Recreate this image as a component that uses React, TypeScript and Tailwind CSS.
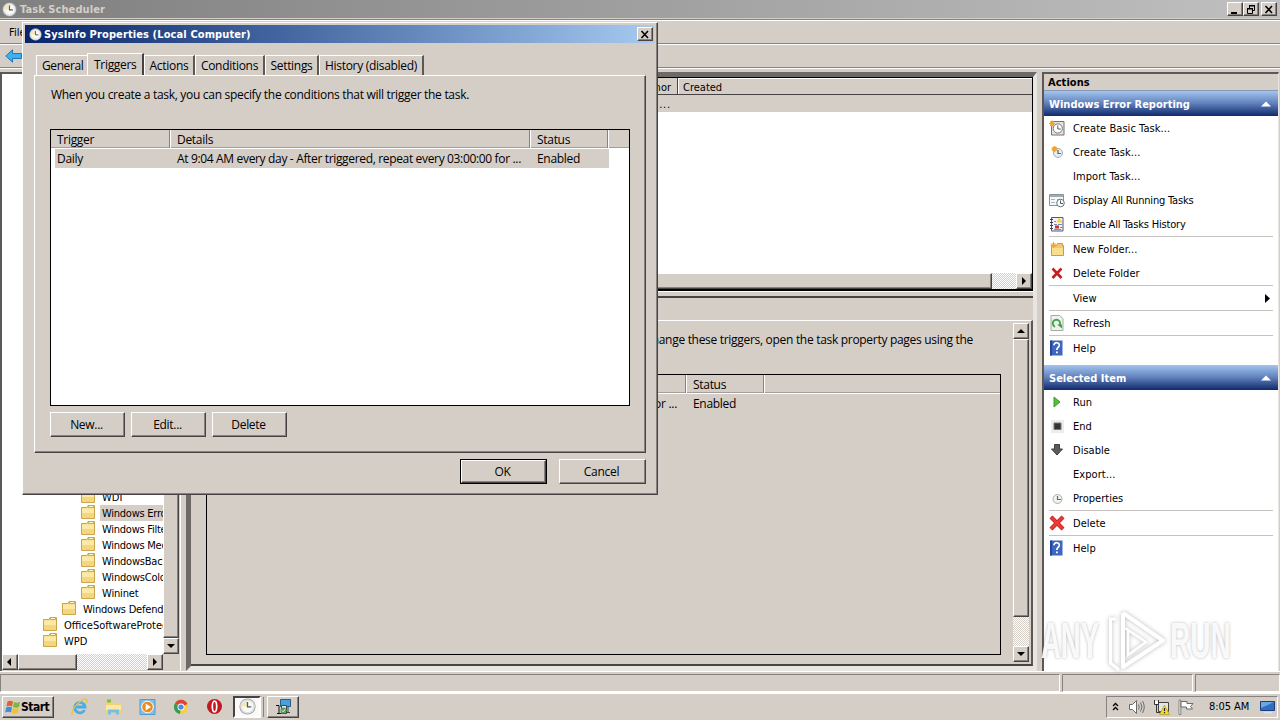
import React from "react";
import clsx from "clsx";

const raised =
  "border border-t-white border-l-white border-b-[#474243] border-r-[#474243] bg-[#d5cec7] shadow-[inset_-1px_-1px_0_#868280]";
const dither =
  "bg-[repeating-conic-gradient(#ffffff_0_25%,#d5cec7_0_50%)] [background-size:2px_2px]";
const segoe = "font-['Open_Sans','Noto_Sans',sans-serif] text-[12px] tracking-[-0.3px]";

type Dir = "up" | "down" | "left" | "right";

function Arrow({ dir }: { dir: Dir }) {
  const d = {
    up: "M0 6h8L4 2z",
    down: "M0 2h8L4 6z",
    left: "M5 0v8L1 4z",
    right: "M2 0v8l4-4z",
  }[dir];
  return (
    <svg width="8" height="8" viewBox="0 0 8 8">
      <path d={d} fill="#000" />
    </svg>
  );
}

function ScrollButton({ dir, className }: { dir: Dir; className?: string }) {
  return (
    <div className={clsx("flex h-4 w-4 shrink-0 items-center justify-center", raised, className)}>
      <Arrow dir={dir} />
    </div>
  );
}

function Clock({ size = 16 }: { size?: number }) {
  return (
    <svg width={size} height={size} viewBox="0 0 16 16">
      <circle cx="8" cy="8" r="7.6" fill="#9a9fa6" />
      <circle cx="8" cy="8" r="6.9" fill="#dfe2e4" />
      <circle cx="8" cy="8" r="5.2" fill="#fbfaf0" />
      <path d="M8 8V2.800A5.200 5.200 0 0 0 2.800 8z" fill="#f7e6ae" />
      <path d="M8 3.800V8.400h3.600" fill="none" stroke="#4b5b74" strokeWidth="1.200" />
    </svg>
  );
}

function Folder() {
  return (
    <svg width="16" height="16" viewBox="0 0 16 16" className="mb-[2px] shrink-0">
      <path d="M1.500 3.500h5.500l1-2h6.500v13h-13z" fill="#f5d983" stroke="#c9a54b" />
      <path d="M2 4.500h12v5H2z" fill="#fce9a6" />
      <path d="M2 9h12v5H2z" fill="#f5d67e" />
      <path d="M8.500 1.500h5v2h-5z" fill="#fff6d2" stroke="#b99a4e" strokeWidth=".8" />
    </svg>
  );
}

function ActionIcon({ name }: { name: string }) {
  switch (name) {
    case "basic":
      return (
        <svg width="16" height="16" viewBox="0 0 16 16">
          <path d="M2.500 1.500h12.500v13.500h-12.500z" fill="#e9e2dc" stroke="#7d6f6a" />
          <circle cx="8.800" cy="8.500" r="4.600" fill="#fff" stroke="#6c7c7c" />
          <path d="M8.800 5.500v3.500h3" fill="none" stroke="#50606a" />
          <path d="M3 .5v6M0 3.500h6M1 1.500l4 4M5 1.500l-4 4" stroke="#f0a431" strokeWidth="1.200" />
        </svg>
      );
    case "create":
      return (
        <svg width="16" height="16" viewBox="0 0 16 16">
          <circle cx="9" cy="9" r="4.500" fill="#e6ecf0" stroke="#9dadb6" />
          <path d="M9 6v3.500h2.800" fill="none" stroke="#54677a" strokeWidth="1.200" />
          <path d="M5.500 2v6M2.500 5h6M3.500 3l4 4M7.500 3l-4 4" stroke="#f0a431" strokeWidth="1.500" />
        </svg>
      );
    case "running":
      return (
        <svg width="16" height="16" viewBox="0 0 16 16">
          <path d="M.5 2.500h14v11H.5z" fill="#f7f8f8" stroke="#8a949b" />
          <path d="M1 3h13v2H1z" fill="#9fa9b1" />
          <path d="M2 7.500h4M2 10.500h4M8 7.500h5" stroke="#a9b3b8" />
          <circle cx="11.500" cy="11" r="3.800" fill="#fff" stroke="#65767a" />
          <path d="M11.500 8.500V11.500h2.500" fill="none" stroke="#3d6a50" />
        </svg>
      );
    case "history":
      return (
        <svg width="16" height="16" viewBox="0 0 16 16">
          <path d="M2.500 1.500h11.500v13.500h-11.500z" fill="#f1f1fa" stroke="#54567c" />
          <path d="M1 3.500h3M1 6.500h3M1 9.500h3M1 12.500h3" stroke="#3d3d50" />
          <path d="M10 1.500l3.500 5h-6z" fill="#f5d72f" />
          <path d="M5 5.500h2M5 8.500h3M9 8.500h4M11 11.500h2.500M5 13.500h7" stroke="#7c88b8" />
          <path d="M6 9.500h4v3H6z" fill="#c8372d" />
        </svg>
      );
    case "newfolder":
      return (
        <svg width="16" height="16" viewBox="0 0 16 16">
          <path d="M2.500 4.500h5l1-2h5v2h1v10h-12z" fill="#f2c96a" stroke="#cd9c3a" />
          <path d="M3 7h11v7H3z" fill="#fadd8d" />
          <path d="M4.500 1v6M1.500 4h6M2.500 2l4 4M6.500 2l-4 4" stroke="#f0a431" />
        </svg>
      );
    case "redx":
      return (
        <svg width="16" height="16" viewBox="0 0 16 16">
          <path d="M3.500 3.500l9 9.500M12.500 3.500l-9 9.500" stroke="#c81e1e" strokeWidth="2.600" />
        </svg>
      );
    case "refresh":
      return (
        <svg width="16" height="16" viewBox="0 0 16 16">
          <path d="M2 .5h8.500l3.500 3v12H2z" fill="#eef4ec" stroke="#a3aaa3" />
          <path d="M6 11.800A3.700 3.700 0 1 1 10.500 10.500" fill="none" stroke="#3fa648" strokeWidth="1.900" />
          <path d="M8 9.500h5v4z" fill="#3fa648" />
        </svg>
      );
    case "help":
      return (
        <svg width="16" height="16" viewBox="0 0 16 16">
          <path d="M1 .5h12.500v15H1z" fill="#3f66bf" />
          <path d="M1 .5h2v15H1z" fill="#25459a" />
          <path d="M5 5.200C5 1.800 10.500 2 10.300 5.200 10.200 7.500 7.800 7.200 7.800 10" fill="none" stroke="#fff" strokeWidth="1.700" />
          <path d="M7 11.500h1.800v1.700H7z" fill="#fff" />
        </svg>
      );
    case "run":
      return (
        <svg width="16" height="16" viewBox="0 0 16 16">
          <path d="M5 3l6 5-6 5z" fill="#4fc23a" stroke="#3b9d2c" />
        </svg>
      );
    case "end":
      return (
        <svg width="16" height="16" viewBox="0 0 16 16">
          <path d="M2 2h13v13H2z" fill="#ececec" />
          <path d="M5 5h7v6.500H5z" fill="#333" stroke="#777" />
        </svg>
      );
    case "disable":
      return (
        <svg width="16" height="16" viewBox="0 0 16 16">
          <path d="M5.500 2.500h5v4.500h3L8 13 2.500 7h3z" fill="#5c5c5c" stroke="#3e3e3e" />
        </svg>
      );
    case "props":
      return (
        <svg width="16" height="16" viewBox="0 0 16 16">
          <circle cx="8.500" cy="9" r="4.500" fill="#f0f3ee" stroke="#a7b0ab" />
          <path d="M8.500 6v3.500H12" fill="none" stroke="#587060" strokeWidth="1.200" />
        </svg>
      );
    case "bigx":
      return (
        <svg width="16" height="16" viewBox="0 0 16 16">
          <path d="M2 2l12 12M14 2l-12 12" stroke="#b71f1f" strokeWidth="4.200" />
          <path d="M2 2l12 12M14 2l-12 12" stroke="#ea3b36" strokeWidth="2.800" />
        </svg>
      );
    default:
      return null;
  }
}

function WinButton({ kind }: { kind: "min" | "restore" | "close" }) {
  return (
    <div className={clsx("flex h-[14px] w-4 items-center justify-center", raised)}>
      <svg width="10" height="9" viewBox="0 0 10 9" fill="none" stroke="#000">
        {kind === "min" && <path d="M1 8h6" strokeWidth="2" />}
        {kind === "restore" && (
          <>
            <path d="M3 1h6M3.500 1v2M8.500 1v4.500H7" />
            <path d="M1 4h6M1.500 4v4.500h5V4" />
            <path d="M3 .5h6M1 3.500h6" />
          </>
        )}
        {kind === "close" && <path d="M1.500 1l6.500 7M8 1l-6.500 7" strokeWidth="1.600" />}
      </svg>
    </div>
  );
}

function TitleBar() {
  return (
    <div className="flex h-[18px] shrink-0 items-center bg-gradient-to-r from-[#808080] to-[#c0c0c0] pr-[3px] pl-[2px]">
      <Clock size={15} />
      <span className="ml-[3px] flex-1 pt-px text-[11px] leading-[18px] font-bold tracking-[0.08px] text-[#d5cec7]">
        Task Scheduler
      </span>
      <div className="flex">
        <WinButton kind="min" />
        <WinButton kind="restore" />
        <div className="w-[2px]" />
        <WinButton kind="close" />
      </div>
    </div>
  );
}

const tree = [
  { name: "WDI", pad: "pl-[78px]" },
  { name: "Windows Error Reporting", pad: "pl-[78px] tracking-[-0.25px]", selected: true },
  { name: "Windows Filtering Platform", pad: "pl-[78px] tracking-[-0.25px]" },
  { name: "Windows Media Sharing", pad: "pl-[78px] tracking-[-0.25px]" },
  { name: "WindowsBackup", pad: "pl-[78px] tracking-[-0.2px]" },
  { name: "WindowsColorSystem", pad: "pl-[78px] tracking-[-0.2px]" },
  { name: "Wininet", pad: "pl-[78px] tracking-[-0.15px]" },
  { name: "Windows Defender", pad: "pl-[59px] tracking-[-0.2px]" },
  { name: "OfficeSoftwareProtectionPlatform", pad: "pl-[40px]" },
  { name: "WPD", pad: "pl-[40px]" },
];

function TreePane() {
  return (
    <div className="flex w-[181px] shrink-0 flex-col border-t-2 border-r border-l-2 border-t-[#5c5855] border-r-white border-l-[#5c5855] pb-px">
      <div className="flex min-h-0 flex-1">
        <div className="flex w-[161px] shrink-0 flex-col justify-end overflow-hidden bg-white pb-[5px]">
          {tree.map((t) => (
            <div key={t.name} className={clsx("flex h-4 items-center whitespace-nowrap", t.pad)}>
              <Folder />
              <span className={clsx("ml-[4px] h-4 pl-[2px] leading-[18px]", t.selected && "bg-[#d5cec7]")}>{t.name}</span>
            </div>
          ))}
        </div>
        <div className="flex w-4 flex-col">
          <ScrollButton dir="up" />
          <div className={clsx("w-4 flex-1", raised)} />
          <ScrollButton dir="down" />
        </div>
      </div>
      <div className="flex h-4">
        <ScrollButton dir="left" />
        <div className={clsx("w-[59px]", raised)} />
        <div className={clsx("w-[70px]", dither)} />
        <ScrollButton dir="right" />
      </div>
    </div>
  );
}

function CenterPane() {
  return (
    <div className="flex w-[851px] shrink-0 flex-col border-t-[5px] border-r-4 border-b-[5px] border-l-[5px] border-t-[#6d6967] border-r-[#e9e6e2] border-b-[#e9e6e2] border-l-[#6d6967]">
      {/* Task list */}
      <div className="flex h-[214px] flex-col border border-b-2 border-black bg-white">
        <div className="flex h-[17px] border-b border-[#474243] bg-[#d5cec7] leading-[19px]">
          <div className="w-[486px] border-r border-[#474243] pr-[6px] text-right">Author</div>
          <div className="flex-1 border-t border-l border-white pl-[4px] leading-[17px]">Created</div>
        </div>
        <div className="flex h-[17px] bg-[#d5cec7]">
          <div className="w-[479px] text-right leading-[19px] tracking-[0.8px]">...</div>
        </div>
        <div className="flex-1" />
        <div className="flex h-4">
          <div className={clsx("flex-1", raised)} />
          <div className={clsx("w-6", dither)} />
          <ScrollButton dir="right" />
        </div>
      </div>
      <div className="h-[5px] border-t border-white" />
      {/* Details of the selected task */}
      <div className="flex min-h-0 flex-1 flex-col border-t-2 border-t-[#474243]">
        <div className="h-[22px]" />
        <div className="flex min-h-0 flex-1 border-t border-r-2 border-b-2 border-t-white border-r-[#5c5855] border-b-[#474243]">
          <div className={clsx("flex flex-1 flex-col pl-[15px]", segoe)}>
            <div className="mt-[10px] h-[18px] w-[767px] text-right leading-[18px] whitespace-nowrap">
              To change these triggers, open the task property pages using the
            </div>
            <div className="mt-[25px] mr-[12px] h-[281px] border border-black">
              <div className="flex h-[19px] border-b border-white leading-[20px] shadow-[inset_0_-1px_0_#a39e99]">
                <div className="w-[479px] border-r border-[#868280]" />
                <div className="w-[78px] border-r border-l border-r-[#868280] border-l-white pl-[6px]">Status</div>
                <div className="border-l border-white" />
              </div>
              <div className="flex h-[20px] leading-[20px]">
                <div className="w-[470px] text-right">for ...</div>
                <div className="pl-[16px]">Enabled</div>
              </div>
            </div>
          </div>
          <div className="mr-[2px] flex w-4 flex-col py-[2px]">
            <ScrollButton dir="up" />
            <div className={clsx("flex-1", raised)} />
            <div className={clsx("h-[29px]", dither)} />
            <ScrollButton dir="down" />
          </div>
        </div>
      </div>
    </div>
  );
}

type Action = { label: string; icon: string; sep?: boolean; more?: boolean };

const taskActions: Action[] = [
  { label: "Create Basic Task...", icon: "basic" },
  { label: "Create Task...", icon: "create" },
  { label: "Import Task...", icon: "" },
  { label: "Display All Running Tasks", icon: "running" },
  { label: "Enable All Tasks History", icon: "history" },
  { label: "New Folder...", icon: "newfolder", sep: true },
  { label: "Delete Folder", icon: "redx" },
  { label: "View", icon: "", sep: true, more: true },
  { label: "Refresh", icon: "refresh", sep: true },
  { label: "Help", icon: "help", sep: true },
];

const itemActions: Action[] = [
  { label: "Run", icon: "run" },
  { label: "End", icon: "end" },
  { label: "Disable", icon: "disable" },
  { label: "Export...", icon: "" },
  { label: "Properties", icon: "props" },
  { label: "Delete", icon: "bigx", sep: true },
  { label: "Help", icon: "help", sep: true },
];

function ActionGroup({ title, actions }: { title: string; actions: Action[] }) {
  return (
    <div>
      <div className="flex h-[25px] items-center justify-between bg-gradient-to-b from-[#a3c5ee] via-[#5f80bb] to-[#12296b] pt-[3px] pr-[7px] pl-[5px] font-bold tracking-[0.01px] text-white">
        <span>{title}</span>
        <svg width="10" height="6" viewBox="0 0 10 6" className="mb-[3px]">
          <path d="M0 5.500h10L5 .5z" fill="#fff" />
        </svg>
      </div>
      {actions.map((a) => (
        <div key={a.label}>
          {a.sep && <div className="mr-[5px] ml-[5px] h-px bg-[#c6c2c0]" />}
          <div className="flex h-6 items-center pr-[7px] pl-[5px]">
            <div className="w-6">
              <ActionIcon name={a.icon} />
            </div>
            <span
              className={clsx(
                "flex-1 pt-[2px]",
                a.label.endsWith("...") ? "tracking-[0.06px]" : a.label.length < 14 ? "tracking-[0.03px]" : "tracking-[-0.18px]"
              )}
            >
              {a.label}
            </span>
            {a.more && (
              <svg width="7" height="9" viewBox="0 0 7 9">
                <path d="M1 0v9l5-4.500z" fill="#000" />
              </svg>
            )}
          </div>
        </div>
      ))}
    </div>
  );
}

function ActionsPane() {
  return (
    <div className="w-[237px] shrink-0 border-t-2 border-r border-l-2 border-t-[#5c5855] border-r-[#e9e5e1] border-l-[#5c5855] bg-white">
      <div className="h-[17px] border-b border-[#8899b5] bg-[#d5cec7] pl-1 leading-[17px] font-bold tracking-[0.05px]">Actions</div>
      <ActionGroup title="Windows Error Reporting" actions={taskActions} />
      <div className="h-[5px]" />
      <ActionGroup title="Selected Item" actions={itemActions} />
    </div>
  );
}

function DialogButton({ children, className }: { children: React.ReactNode; className: string }) {
  return <div className={clsx("flex items-center justify-center pt-px pr-[2px]", raised, className)}>{children}</div>;
}

const tabs = [
  { label: "Actions", w: "w-[51px]" },
  { label: "Conditions", w: "w-[70px]" },
  { label: "Settings", w: "w-[54px]" },
  { label: "History (disabled)", w: "w-[105px]" },
];

function Dialog() {
  return (
    <div
      className={clsx(
        "absolute top-[22px] left-[22px] flex h-[473px] w-[636px] flex-col p-[2px] pr-[3px]",
        raised,
        segoe
      )}
    >
      <div className="flex h-[18px] shrink-0 items-center bg-gradient-to-r from-[#0a246a] to-[#a6caf0] pr-[1px] pl-[4px]">
        <Clock size={13} />
        <span className="ml-[2px] flex-1 pt-[2px] font-['DejaVu_Sans_Condensed','DejaVu_Sans',sans-serif] text-[11px] font-bold tracking-[0.11px] text-white">
          SysInfo Properties (Local Computer)
        </span>
        <WinButton kind="close" />
      </div>
      <div className="mt-[10px] flex h-[22px] items-end pl-[11px] leading-[20px]">
        <div className="h-[20px] w-[51px] border-t border-l border-white pl-[5px] tracking-[-0.4px]">General</div>
        <div className="-mb-px h-[23px] w-[57px] border-t border-r-2 border-l border-t-white border-r-[#474243] border-l-white bg-[#d5cec7] pl-[6px] leading-[21px]">
          Triggers
        </div>
        {tabs.map((t) => (
          <div
            key={t.label}
            className={clsx(
              "h-[20px] border-t border-r-2 border-l border-t-white border-r-[#5c5855] border-l-white text-center whitespace-nowrap",
              t.w
            )}
          >
            {t.label}
          </div>
        ))}
      </div>
      <div className={clsx("ml-[9px] h-[378px] w-[612px] px-[15px]", raised)}>
        <div className="mt-[8px] h-[20px] pl-px leading-[21px]">
          When you create a task, you can specify the conditions that will trigger the task.
        </div>
        <div className="mt-[25px] h-[277px] border border-black bg-white">
          <div className="flex h-[19px] border-b border-white bg-[#d5cec7] leading-[20px] shadow-[inset_0_-1px_0_#a39e99]">
            <div className="w-[119px] border-r border-[#868280] pl-[6px]">Trigger</div>
            <div className="w-[360px] border-r border-l border-r-[#868280] border-l-white pl-[6px]">Details</div>
            <div className="w-[78px] border-r border-l border-r-[#868280] border-l-white pl-[6px]">Status</div>
            <div className="border-l border-white" />
          </div>
          <div className="ml-[4px] flex h-[19px] w-[554px] bg-[#d5cec7] leading-[20px] whitespace-nowrap">
            <div className="w-[122px] pl-[2px]">Daily</div>
            <div className="w-[360px] tracking-[-0.34px]">
              At 9:04 AM every day - After triggered, repeat every 03:00:00 for ...
            </div>
            <div>Enabled</div>
          </div>
        </div>
        <div className="mt-[6px] flex gap-[6px]">
          <DialogButton className="h-[25px] w-[75px]">New...</DialogButton>
          <DialogButton className="h-[25px] w-[75px]">Edit...</DialogButton>
          <DialogButton className="h-[25px] w-[75px]">Delete</DialogButton>
        </div>
      </div>
      <div className="mt-[6px] flex justify-end gap-[12px] pr-[8px]">
        <div className="border border-black">
          <DialogButton className="h-[23px] w-[85px]">OK</DialogButton>
        </div>
        <DialogButton className="h-[25px] w-[87px]">Cancel</DialogButton>
      </div>
    </div>
  );
}

function StatusBar() {
  const cell = "h-[18px] border border-t-[#868280] border-l-[#868280] border-b-white border-r-white";
  return (
    <div className="flex h-[21px] shrink-0 gap-[2px] border-b border-white pt-[2px]">
      <div className={clsx("w-[1060px]", cell)} />
      <div className={clsx("w-[131px]", cell)} />
      <div className={clsx("flex-1", cell)} />
    </div>
  );
}

function Taskbar() {
  return (
    <div className="flex h-[27px] shrink-0 items-center border-t border-white pr-[2px] pb-px pl-[2px]">
      <div className={clsx("flex h-[22px] w-[52px] items-center pl-[2px]", raised)}>
        <svg width="16" height="16" viewBox="0 0 16 16">
          <path d="M2.500 2.500Q5 .8 8 2.500L7 7.500Q4.500 6 1.500 7.500z" fill="#e2602c" />
          <path d="M9 3q3 1.500 6 0l-1 5q-3 1.500-6 0z" fill="#79b941" />
          <path d="M1.200 8.500q3-1.500 5.800 0l-1 5q-3-1.500-5.800 0z" fill="#3e8fd4" />
          <path d="M7.800 9q3 1.500 6 0l-1 5q-3 1.500-6 0z" fill="#f5bf2d" />
        </svg>
        <span className="pt-px text-[12px] font-bold tracking-[-0.5px]">Start</span>
      </div>
      <div className="ml-[17px] flex items-center gap-[17px]">
        {/* Internet Explorer */}
        <svg width="17" height="18" viewBox="0 0 17 18">
          <path d="M13.500 12A5.200 5.200 0 1 1 14 9H4.500" fill="none" stroke="#48aee8" strokeWidth="2.800" />
          <path d="M1.500 16.500C-1.500 12 12-1 15.500 1.500q1.200 1-.5 4" fill="none" stroke="#edc13a" strokeWidth="1.300" />
        </svg>
        {/* Explorer */}
        <svg width="17" height="18" viewBox="0 0 17 18">
          <path d="M1 3h6l1 2h8v10H1z" fill="#f1d274" />
          <path d="M2 1.500h4v3H2z" fill="#7dbb55" />
          <path d="M1 7h15v5H1z" fill="#f9e9a8" />
          <path d="M3 16.500v-5h11v5h-3v-2H6v2z" fill="#75bfe6" />
        </svg>
        {/* Media player */}
        <svg width="17" height="18" viewBox="0 0 17 18">
          <path d="M1 1.500h15v15H1z" fill="#7fc0ea" stroke="#579bc8" />
          <circle cx="8.500" cy="9" r="5.800" fill="#f08a1d" stroke="#fff" />
          <path d="M6.700 5.500L12 9l-5.300 3.500z" fill="#fff" />
        </svg>
        {/* Chrome */}
        <svg width="16" height="16" viewBox="0 0 16 16">
          <circle cx="8" cy="8" r="7" fill="#f9cf3a" />
          <path d="M8 8L1.900 4.500A7 7 0 0 1 14.500 5z" fill="#dc4437" />
          <path d="M8 8L1.900 4.500A7 7 0 0 0 7 15z" fill="#2d9f58" />
          <circle cx="8" cy="8" r="3.500" fill="#fff" />
          <circle cx="8" cy="8" r="2.600" fill="#4a89ee" />
        </svg>
        {/* Opera */}
        <svg width="17" height="17" viewBox="0 0 17 17">
          <circle cx="8.500" cy="8.500" r="7.500" fill="#c41722" />
          <ellipse cx="8.500" cy="8.500" rx="2.200" ry="5.300" fill="none" stroke="#fff" strokeWidth="1.700" />
        </svg>
      </div>
      <div className="ml-[10px] flex h-[22px] w-[28px] items-center justify-center border-2 border-t-[#474243] border-r-white border-b-white border-l-[#474243] bg-[#fbfaf8]">
        <Clock size={17} />
      </div>
      <div className="h-[20px] w-[3px] border-r border-[#868280]" />
      <div className={clsx("ml-[3px] flex h-[22px] w-[32px] items-center justify-center", raised)}>
        <svg width="17" height="17" viewBox="0 0 17 17">
          <path d="M5.500 1.500h10v7h-10z" fill="#4aa0dc" stroke="#2b5a82" />
          <path d="M13 9v5M10 14.500h5" stroke="#35474f" />
          <path d="M1 7.500h3v8M2 15.500h4" fill="none" stroke="#111" />
          <path d="M6.500 7.500h5v8h-5z" fill="#e7e7e0" stroke="#444" />
          <circle cx="8.500" cy="12.500" r="3" fill="#4f9f56" />
          <path d="M7 12.500l1.200 1.200 2-2.400" fill="none" stroke="#fff" />
        </svg>
      </div>
      <div className="flex-1" />
      {/* Tray */}
      <div className="flex h-[22px] w-[172px] items-center border border-t-[#868280] border-r-white border-b-white border-l-[#868280] pl-[5px]">
        <svg width="7" height="9" viewBox="0 0 7 9" fill="none" stroke="#000" strokeWidth="1.300">
          <path d="M1 4l2.500-2.500L6 4M1 8l2.500-2.500L6 8" />
        </svg>
        <svg className="ml-[9px]" width="17" height="16" viewBox="0 0 17 16" fill="none" stroke="#6b6b6b">
          <path d="M1.500 5.500h3l4-4v13l-4-4h-3z" fill="#fff" />
          <path d="M10.500 5.500q1.500 2.500 0 5M12.500 3.500q3 4.500 0 9M14.500 2q3.500 6 0 12" />
        </svg>
        <svg className="ml-[8px]" width="17" height="16" viewBox="0 0 17 16">
          <path d="M5.500 3.500h10v9h-10z" fill="#e3e5e6" stroke="#444" />
          <path d="M1.500 1v4.500h4V1M3.500 5.500v8h5" fill="none" stroke="#333" />
          <path d="M2 2h3v3H2z" fill="#fff" />
          <path d="M11.500 6l5 9.500h-10z" fill="#f6d92a" stroke="#b89a12" strokeWidth=".7" />
          <path d="M11.500 9v3M11.500 13v1.200" stroke="#222" strokeWidth="1.200" />
        </svg>
        <svg className="ml-[8px]" width="16" height="16" viewBox="0 0 16 16">
          <path d="M1 1h1.800v14.500H1z" fill="#fff" stroke="#6b6b6b" strokeWidth=".8" />
          <path d="M3 2.500h6v2h6l-2.500 3 2 2.500H8.500V8H3z" fill="#fff" stroke="#6b6b6b" />
        </svg>
        <span className="ml-[15px] w-[42px] pt-px text-[11px] tracking-[-0.05px] whitespace-nowrap">8:05 AM</span>
        <svg className="ml-[9px]" width="15" height="14" viewBox="0 0 15 14">
          <path d="M.5 1.500h14v9H.5z" fill="#2e6ec4" stroke="#1d3e78" />
          <path d="M1 2h13L1 8z" fill="#6ea6e4" />
          <path d="M4 12h8v1.500H4z" fill="#d9e2ec" />
        </svg>
      </div>
    </div>
  );
}

function Watermark() {
  return (
    <div className="absolute top-[606px] left-[1041px] flex items-center font-['Liberation_Sans',sans-serif] text-[50px] leading-[70px] font-bold text-white/90 [text-shadow:0_0_4px_rgba(110,110,110,0.5)]">
      <span className="w-[64px] origin-left scale-x-[0.55]">ANY</span>
      <svg width="62" height="68" viewBox="0 0 62 68" fill="none" stroke="#fff" strokeWidth="4" className="drop-shadow-[0_0_2px_rgba(110,110,110,0.5)]">
        <path d="M18 6v54l40-26.500L18 6" strokeLinejoin="round" />
        <path d="M11 12H5.500v44L14 63" strokeWidth="3" />
        <path d="M23 22v26l18-13L20 21" strokeWidth="2.500" />
      </svg>
      <span className="w-[64px] origin-left translate-x-[3px] scale-x-[0.56]">RUN</span>
    </div>
  );
}

export default function App() {
  return (
    <div className="relative flex h-[720px] w-[1280px] flex-col overflow-hidden bg-[#d5cec7] font-['DejaVu_Sans_Condensed','DejaVu_Sans',sans-serif] text-[11px] text-black">
      <TitleBar />
      <div className="mt-px flex h-[25px] shrink-0 items-center border-t border-b border-[#868280] pt-[3px] pl-[9px] shadow-[inset_0_1px_0_#fff]">
        File
      </div>
      <div className="flex h-[24px] shrink-0 items-center border-t border-b border-t-white border-b-[#868280] pl-[5px]">
        <svg width="17" height="14" viewBox="0 0 17 14">
          <path d="M.8 7L7.500.8v3.700h9v5h-9v3.700z" fill="#3db0ee" stroke="#2079b6" />
        </svg>
      </div>
      <div className="h-[4px] shrink-0 border-t border-white" />
      {/* Panes */}
      <div className="flex h-[600px] shrink-0 border-b border-white">
        <TreePane />
        <div className="w-[5px] shrink-0" />
        <CenterPane />
        <div className="w-[5px] shrink-0" />
        <ActionsPane />
      </div>
      <StatusBar />
      <Taskbar />
      <Dialog />
      <Watermark />
    </div>
  );
}
